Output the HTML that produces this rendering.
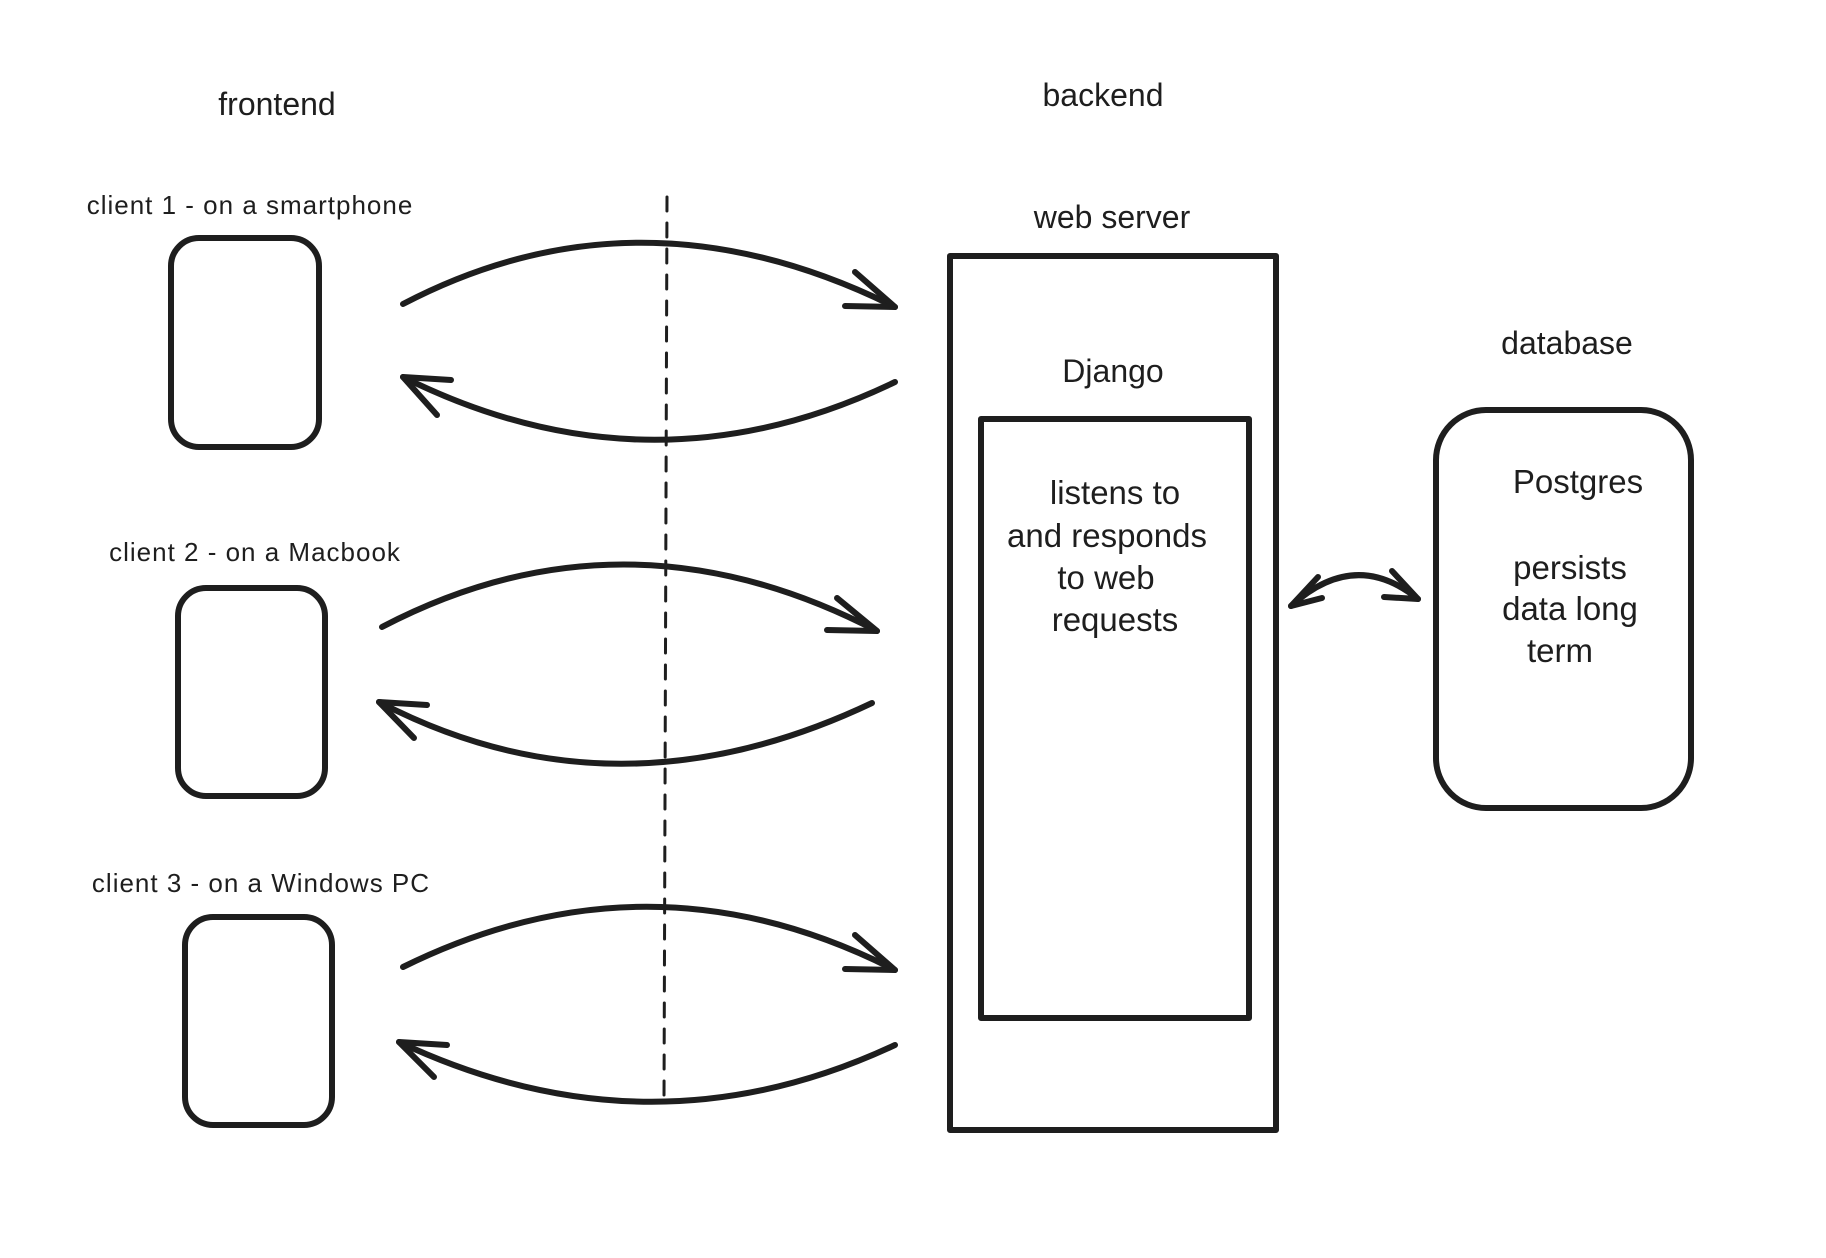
<!DOCTYPE html>
<html><head><meta charset="utf-8"><style>
html,body{margin:0;padding:0;background:#fff;}
svg{display:block}
text{font-family:"Liberation Sans","DejaVu Sans",sans-serif;fill:#1e1e1e;text-anchor:middle;}
</style></head><body>
<svg width="1826" height="1258" viewBox="0 0 1826 1258" xmlns="http://www.w3.org/2000/svg">
<rect width="1826" height="1258" fill="#fff"/>
<g fill="none" stroke="#1e1e1e" stroke-width="6" stroke-linecap="round" stroke-linejoin="round">
<rect x="171" y="238" width="148" height="209" rx="28"/>
<rect x="178" y="588" width="147" height="208" rx="28"/>
<rect x="185" y="917" width="147" height="208" rx="28"/>
<line x1="667" y1="197" x2="664" y2="1100" stroke-width="3" stroke-dasharray="14 12"/>
<path d="M403 304 Q640 180 895 307"/><path d="M855 272 L895 307 L845 306"/>
<path d="M895 382 Q650 500 403 377"/><path d="M403 377 L451 380 M403 377 L437 415"/>
<path d="M382 627 Q625 500 877 631"/><path d="M837 598 L877 631 L827 630"/>
<path d="M872 703 Q615 825 379 702"/><path d="M379 702 L427 705 M379 702 L414 738"/>
<path d="M403 967 Q650 845 895 970"/><path d="M855 935 L895 970 L845 969"/>
<path d="M895 1045 Q650 1160 399 1042"/><path d="M399 1042 L447 1045 M399 1042 L434 1077"/>
<rect x="950" y="256" width="326" height="874"/>
<rect x="981" y="419" width="268" height="599"/>
<rect x="1436" y="410" width="255" height="398" rx="50"/>
<path d="M1291 606 Q1355 548 1418 599"/>
<path d="M1291 606 L1318 577 M1291 606 L1322 598"/>
<path d="M1418 599 L1392 571 M1418 599 L1384 597"/>
</g>
<text x="277" y="115" font-size="32">frontend</text>
<text x="1103" y="106" font-size="32">backend</text>
<text x="250" y="214" font-size="26" letter-spacing="1">client 1 - on a smartphone</text>
<text x="255" y="561" font-size="26" letter-spacing="1">client 2 - on a Macbook</text>
<text x="261" y="892" font-size="26" letter-spacing="1">client 3 - on a Windows PC</text>
<text x="1112" y="228" font-size="32">web server</text>
<text x="1113" y="382" font-size="32">Django</text>
<text x="1115" y="504" font-size="33">listens to</text>
<text x="1107" y="547" font-size="33">and responds</text>
<text x="1106" y="589" font-size="33">to web</text>
<text x="1115" y="631" font-size="33">requests</text>
<text x="1567" y="354" font-size="32">database</text>
<text x="1578" y="493" font-size="33">Postgres</text>
<text x="1570" y="579" font-size="33">persists</text>
<text x="1570" y="620" font-size="33">data long</text>
<text x="1560" y="662" font-size="33">term</text>
</svg>
</body></html>
